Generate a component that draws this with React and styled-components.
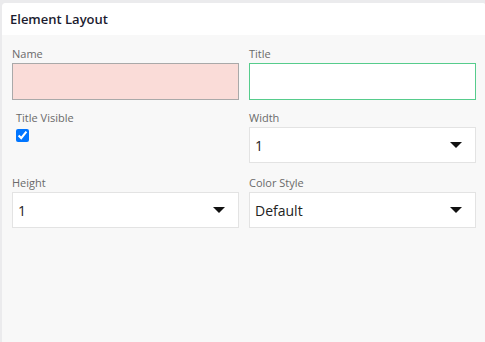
import React, { useState } from 'react'
import styled, { createGlobalStyle } from 'styled-components';

const GlobalStyle = createGlobalStyle`
html, body {
  margin:0;
  padding:0;
  background:#ebebed;
  overflow:hidden;
  font-family:"Open Sans", "Liberation Sans", sans-serif;
}
`
const Card = styled.div`
margin:3px 0 0 2px;
width:484px;
height:339px;
background:#f8f8f8;
border-radius:4px 4px 0 0;
overflow:hidden;
display:flex;
flex-direction:column;
`
const Header = styled.div`
height:32px;
background:#fff;
display:flex;
align-items:center;
padding-left:8px;
font-size:13px;
font-weight:600;
color:#1c1c30;
`
const Form = styled.div`
display:grid;
grid-template-columns:227px 227px;
column-gap:10px;
row-gap:10px;
padding:11px 10px 0 10px;
align-items:start;
`
const Field = styled.div`
display:flex;
flex-direction:column;
padding-left:${p => p.$indent || 0}px;
`
const Label = styled.label`
font-size:11px;
line-height:16px;
color:#6a6a6a;
margin-bottom:1px;
`
const TextInput = styled.input`
box-sizing:border-box;
height:37px;
width:100%;
margin:0;
border:1px solid ${p => p.$state === 'error' ? '#a9a9a9' : '#56cc8c'};
background:${p => p.$state === 'error' ? '#fadcd8' : '#fff'};
outline:none;
font-family:inherit;
font-size:14px;
padding:0 5px;
`
const SelectBox = styled.div`
box-sizing:border-box;
height:36px;
margin-bottom:2px;
border:1px solid #e3e3e3;
background:#fff;
display:flex;
align-items:center;
justify-content:space-between;
padding:0 13px 0 5px;
font-size:14px;
color:#222;
`
const Arrow = styled.span`
width:0;
height:0;
border-left:6px solid transparent;
border-right:6px solid transparent;
border-top:6px solid #111;
`
const Check = styled.input`
width:13px;
height:13px;
margin:2px 0 0 0;
accent-color:#0075ff;
`

const Select = ({ value }) => (
   <SelectBox>
      <span>{value}</span>
      <Arrow />
   </SelectBox>
)

export default function App() {
   const [visible, setVisible] = useState(true);
   return (
      <>
         <GlobalStyle />
         <Card>
            <Header>Element Layout</Header>
            <Form>
               <Field>
                  <Label>Name</Label>
                  <TextInput $state="error" />
               </Field>
               <Field>
                  <Label>Title</Label>
                  <TextInput $state="ok" />
               </Field>
               <Field $indent={4}>
                  <Label>Title Visible</Label>
                  <Check type="checkbox" checked={visible} onChange={e => setVisible(e.target.checked)} />
               </Field>
               <Field>
                  <Label>Width</Label>
                  <Select value="1" />
               </Field>
               <Field>
                  <Label>Height</Label>
                  <Select value="1" />
               </Field>
               <Field>
                  <Label>Color Style</Label>
                  <Select value="Default" />
               </Field>
            </Form>
         </Card>
      </>
   )
}
